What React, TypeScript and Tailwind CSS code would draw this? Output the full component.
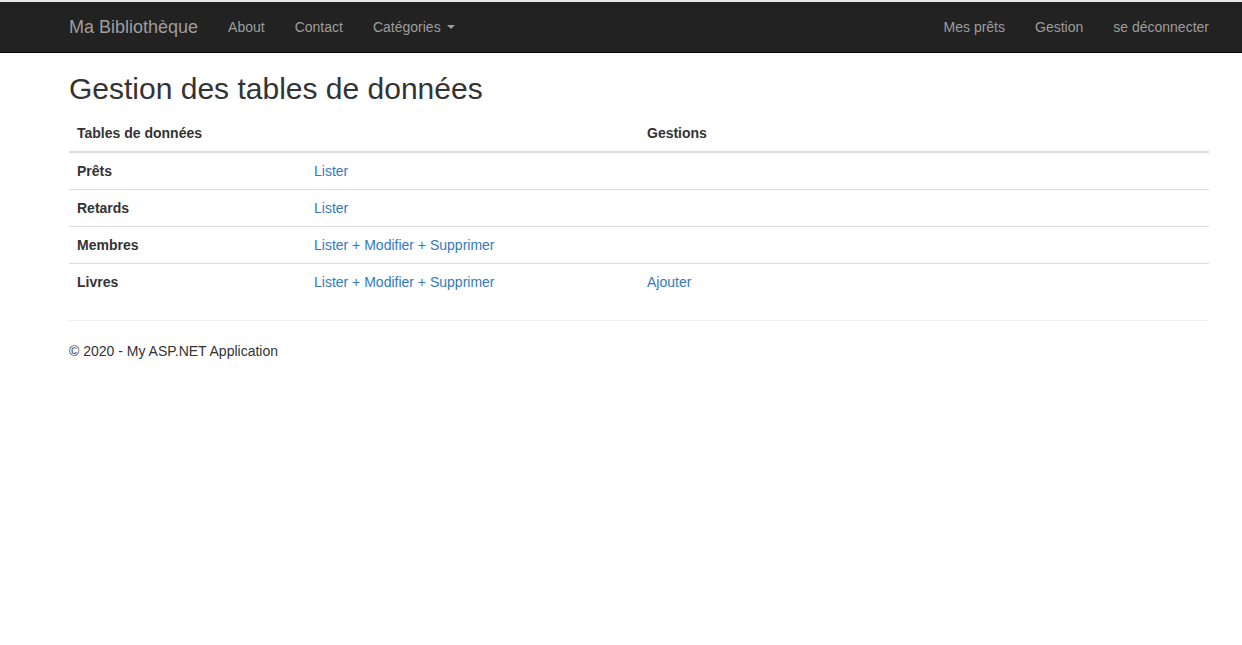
import React from 'react';

const rows = [
  { name: 'Prêts', actions: 'Lister', extra: '' },
  { name: 'Retards', actions: 'Lister', extra: '' },
  { name: 'Membres', actions: 'Lister + Modifier + Supprimer', extra: '' },
  { name: 'Livres', actions: 'Lister + Modifier + Supprimer', extra: 'Ajouter' },
];

const NavLink: React.FC<{ label: string; caret?: boolean }> = ({ label, caret }) => (
  <a href="#" className="flex items-center px-[15px] h-[50px] text-[14px] text-[#9d9d9d] hover:text-white">
    {label}
    {caret && (
      <span className="ml-[6px] inline-block w-0 h-0 border-t-[4px] border-t-[#9d9d9d] border-x-[4px] border-x-transparent" />
    )}
  </a>
);

export default function App() {
  return (
    <div className="min-h-screen bg-white text-[#333] text-[14px] leading-5" style={{ fontFamily: '"Liberation Sans", Arial, sans-serif' }}>
      <div className="h-[2px] bg-[#e6e6e6]" />
      <nav className="bg-[#222] border-b border-[#080808]">
        <div className="w-[1140px] ml-[69px] flex justify-between">
          <div className="flex">
            <a href="#" className="flex items-center h-[50px] pr-[15px] text-[18px] text-[#9d9d9d]">
              Ma Bibliothèque
            </a>
            <NavLink label="About" />
            <NavLink label="Contact" />
            <NavLink label="Catégories" caret />
          </div>
          <div className="flex -mr-[15px]">
            <NavLink label="Mes prêts" />
            <NavLink label="Gestion" />
            <NavLink label="se déconnecter" />
          </div>
        </div>
      </nav>

      <div className="w-[1140px] ml-[69px]">
        <h2 className="mt-[19px] mb-[10px] text-[30px] leading-[33px] font-normal">Gestion des tables de données</h2>

        <table className="w-full table-fixed border-separate border-spacing-0 mb-5">
          <colgroup>
            <col className="w-[237px]" />
            <col className="w-[333px]" />
            <col />
          </colgroup>
          <thead>
            <tr>
              <th className="text-left font-bold p-2 border-b-2 border-[#ddd]">Tables de données</th>
              <th className="p-2 border-b-2 border-[#ddd]"></th>
              <th className="text-left font-bold p-2 border-b-2 border-[#ddd]">Gestions</th>
            </tr>
          </thead>
          <tbody>
            {rows.map((r, i) => (
              <tr key={r.name}>
                <td className={`p-2 font-bold ${i > 0 ? 'border-t border-[#ddd]' : ''}`}>{r.name}</td>
                <td className={`p-2 ${i > 0 ? 'border-t border-[#ddd]' : ''}`}>
                  <a href="#" className="text-[#337ab7] hover:underline">{r.actions}</a>
                </td>
                <td className={`p-2 ${i > 0 ? 'border-t border-[#ddd]' : ''}`}>
                  {r.extra && <a href="#" className="text-[#337ab7] hover:underline">{r.extra}</a>}
                </td>
              </tr>
            ))}
          </tbody>
        </table>

        <hr className="border-0 border-t border-[#eee] mb-5" />
        <footer>
          <p>© 2020 - My ASP.NET Application</p>
        </footer>
      </div>
    </div>
  );
}
